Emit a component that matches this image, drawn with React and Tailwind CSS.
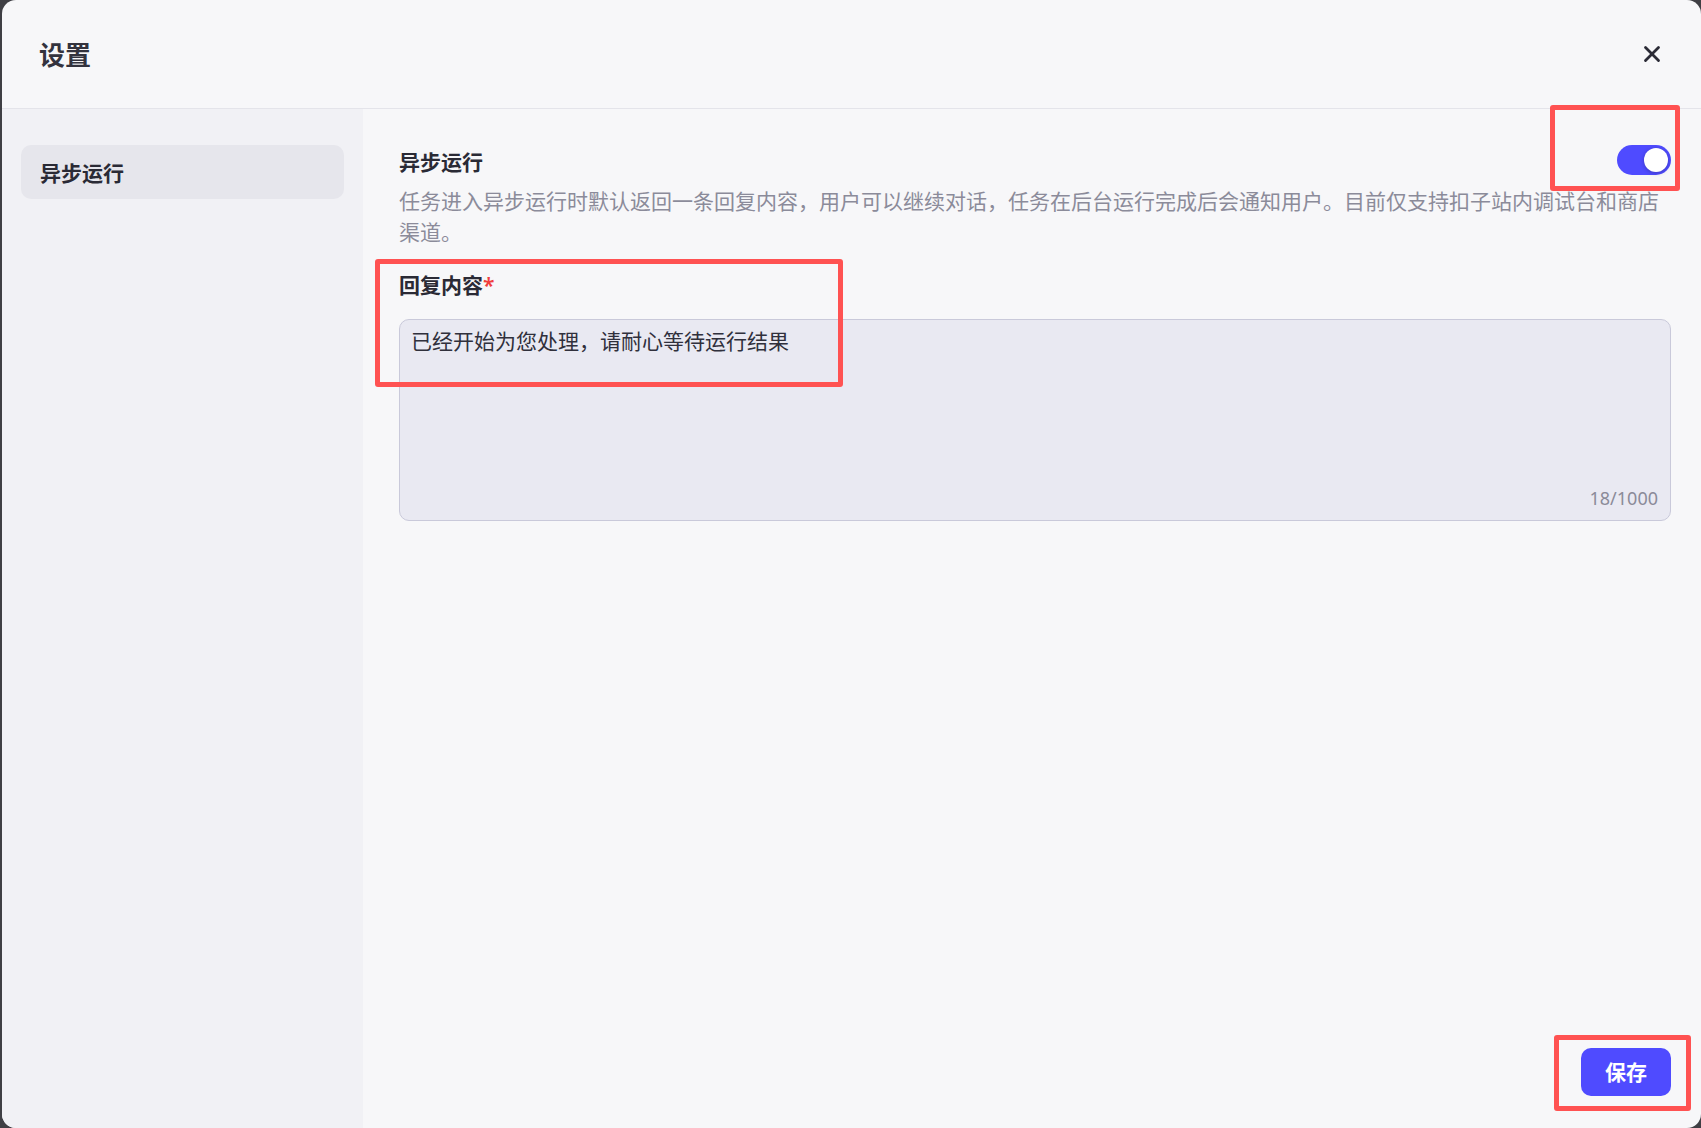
import { X } from 'lucide-react'

const font = { fontFamily: '"Noto Sans", "Noto Sans CJK SC", sans-serif' }

function Toggle({ on }) {
  return (
    <div
      className={`flex h-[30px] w-[54px] items-center rounded-full px-[3px] ${
        on ? 'justify-end bg-[#4f4bff]' : 'justify-start bg-[#d0d0da]'
      }`}
    >
      <div className="h-[24px] w-[24px] rounded-full bg-white shadow-[0_1px_4px_rgba(0,0,0,0.25)]" />
    </div>
  )
}

function Sidebar() {
  return (
    <div className="w-[361px] shrink-0 bg-[#f1f1f5] px-[19px] pt-[36px]">
      <div className="flex h-[54px] items-center rounded-[10px] bg-[#e6e6ec] px-[19px] pt-[4px] text-[21px] font-semibold text-[#2a2a35]">
        异步运行
      </div>
    </div>
  )
}

function Annotation({ className }) {
  return (
    <div
      className={`pointer-events-none absolute rounded-[3px] border-[5px] border-[#ff5252] ${className}`}
    />
  )
}

export default function App() {
  const reply = '已经开始为您处理，请耐心等待运行结果'

  return (
    <div className="relative h-screen w-full overflow-hidden bg-[#3f3f44] pl-[2px]" style={font}>
      <div className="flex h-[1128px] flex-col overflow-hidden rounded-[14px] bg-[#f7f7f9]">
        <div className="flex h-[109px] shrink-0 items-center justify-between border-b border-[#e4e4ea] pl-[37px] pr-[36px]">
          <h1 className="pt-[2px] text-[26px] font-semibold text-[#33333e]">设置</h1>
          <X size={26} strokeWidth={2.6} className="text-[#2b2b36]" />
        </div>

        <div className="flex min-h-0 flex-1">
          <Sidebar />

          <div className="flex flex-1 flex-col pl-[36px] pr-[30px] pt-[36px] pb-[32px]">
            <div className="flex h-[30px] items-center justify-between">
              <span className="pt-[5px] text-[21px] font-semibold text-[#2a2a35]">异步运行</span>
              <Toggle on />
            </div>
            <p className="mt-[11px] text-[21px] leading-[31px] text-[#8b8b9a]">
              任务进入异步运行时默认返回一条回复内容，用户可以继续对话，任务在后台运行完成后会通知用户。目前仅支持扣子站内调试台和商店渠道。
            </p>

            <div className="mt-[21px] text-[21px] font-semibold leading-[32px] text-[#2a2a35]">
              回复内容<span className="text-[#f03e3e]">*</span>
            </div>
            <div className="relative mt-[18px] h-[202px] rounded-[10px] border border-[#c9c9da] bg-[#e9e9f2] px-[11px] pt-[7px]">
              <div className="text-[21px] leading-[28px] text-[#30303c]">{reply}</div>
              <span className="absolute bottom-[8px] right-[12px] text-[18px] text-[#8b8b99]">
                {reply.length}/1000
              </span>
            </div>

            <div className="mt-auto flex justify-end">
              <button className="h-[48px] w-[90px] rounded-[10px] bg-[#4f4bff] pt-[2px] text-[21px] font-semibold text-white">
                保存
              </button>
            </div>
          </div>
        </div>
      </div>

      <Annotation className="left-[1550px] top-[105px] h-[86px] w-[130px]" />
      <Annotation className="left-[375px] top-[259px] h-[128px] w-[468px]" />
      <Annotation className="left-[1554px] top-[1035px] h-[76px] w-[137px]" />
    </div>
  )
}
